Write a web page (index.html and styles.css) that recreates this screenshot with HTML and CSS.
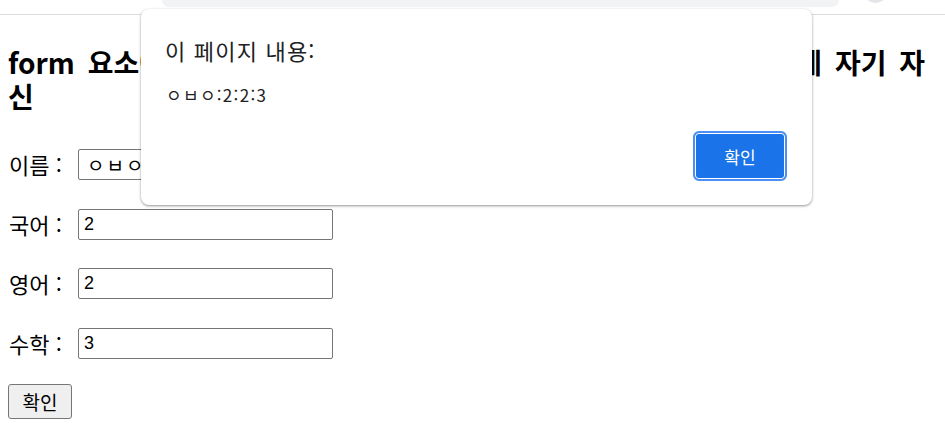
FILE: index.html
```html
<!DOCTYPE html>
<html lang="ko">
<head>
<meta charset="utf-8">
<title>form</title>
<link rel="stylesheet" href="styles.css">
</head>
<body>
<div class="chrome">
  <div class="omnibox"></div>
  <div class="avatar"></div>
</div>
<main class="page">
  <h2 class="title">form 요소에서 this는 이벤트가 발생한 요소 객체를 가리키며 폼에 자기 자신</h2>
  <form class="form">
    <div class="row"><label class="label">이름 :</label><input class="field field-name" type="text" value="ㅇㅂㅇ"></div>
    <div class="row"><label class="label">국어 :</label><input class="field" type="text" value="2"></div>
    <div class="row"><label class="label">영어 :</label><input class="field" type="text" value="2"></div>
    <div class="row"><label class="label">수학 :</label><input class="field" type="text" value="3"></div>
    <div class="actions"><button class="submit" type="button">확인</button></div>
  </form>
</main>
<div class="dialog">
  <div class="dialog-title">이 페이지 내용:</div>
  <div class="dialog-msg">ㅇㅂㅇ:2:2:3</div>
  <div class="dialog-actions"><button class="ok" type="button">확인</button></div>
</div>
</body>
</html>
```
FILE: styles.css
```css
* { box-sizing: border-box; }
html, body { margin: 0; padding: 0; background: #fff; }
body {
  font-family: "Noto Sans CJK KR", "Liberation Sans", sans-serif;
  color: #000;
  width: 945px;
  height: 445px;
  overflow: hidden;
  position: relative;
}
.chrome {
  height: 15px;
  border-bottom: 1px solid #dadce0;
  display: flex;
  align-items: flex-start;
  padding-left: 162px;
  overflow: hidden;
}
.omnibox {
  width: 677px;
  height: 7px;
  background: #f1f3f4;
  border-radius: 0 0 14px 14px;
}
.avatar {
  width: 25px;
  height: 25px;
  margin-top: -22px;
  margin-left: 24px;
  border-radius: 50%;
  background: #e3e5e8;
}
.page {
  padding: 8px;
}
.title {
  margin: 22px 0 0;
  font-size: 28px;
  line-height: 34px;
  font-weight: 700;
  word-spacing: 5px;
  word-break: break-all;
}
.form {
  display: flex;
  flex-direction: column;
  margin-top: 36px;
}
.row {
  display: flex;
  align-items: center;
  height: 31px;
  margin-bottom: 28.67px;
}
.label {
  font-size: 22px;
  padding-left: 1px;
  width: 70px;
  line-height: 31px;
  white-space: pre;
}
.field {
  width: 255px;
  height: 31px;
  border: 1px solid #767676;
  border-radius: 2px;
  padding: 0 5px;
  font-family: "Liberation Sans", "Noto Sans CJK KR", sans-serif;
  font-size: 18px;
  color: #000;
  background: #fff;
}
.field-name {
  font-family: "Noto Sans CJK KR", sans-serif;
  font-size: 19px;
  letter-spacing: 2px;
  padding-left: 8px;
}
.actions {
  margin-top: -4px;
}
.submit {
  width: 64px;
  height: 35px;
  background: #efefef;
  border: 1px solid #767676;
  border-radius: 3px;
  font-family: "Noto Sans CJK KR", sans-serif;
  font-size: 19px;
  color: #000;
  padding: 0;
}
.dialog {
  position: absolute;
  left: 141px;
  top: 9px;
  width: 671px;
  height: 196px;
  background: #fff;
  border-radius: 8px;
  box-shadow: 0 1px 3px rgba(0,0,0,0.3), 0 1px 2px rgba(0,0,0,0.15);
  padding: 24px 25px 0 24px;
  display: flex;
  flex-direction: column;
}
.dialog-title {
  font-size: 22px;
  line-height: 34px;
  letter-spacing: 1.2px;
  color: #202124;
}
.dialog-msg {
  margin-top: 17px;
  font-size: 17px;
  line-height: 22px;
  letter-spacing: 1.3px;
  color: #202124;
  padding-left: 1px;
}
.dialog-actions {
  display: flex;
  justify-content: flex-end;
  margin-top: 25px;
}
.ok {
  width: 94px;
  height: 50px;
  background: #1a73e8;
  border: 2px solid #4b8ef5;
  border-radius: 6px;
  box-shadow: inset 0 0 0 1px #fff;
  color: #fff;
  font-family: "Noto Sans CJK KR", sans-serif;
  font-size: 17px;
  padding: 0;
}
```
